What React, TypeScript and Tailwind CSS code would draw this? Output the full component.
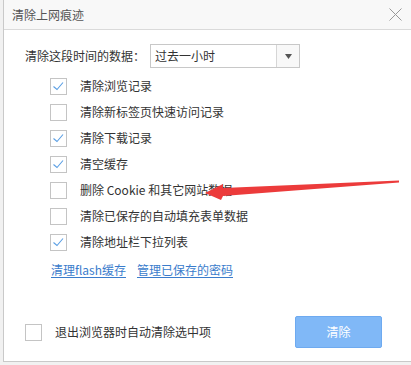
import React from 'react';

type Item = { label: string; checked: boolean };

const items: Item[] = [
  { label: '清除浏览记录', checked: true },
  { label: '清除新标签页快速访问记录', checked: false },
  { label: '清除下载记录', checked: true },
  { label: '清空缓存', checked: true },
  { label: '删除 Cookie 和其它网站数据', checked: false },
  { label: '清除已保存的自动填充表单数据', checked: false },
  { label: '清除地址栏下拉列表', checked: true },
];

function CheckBox({ checked }: { checked: boolean }) {
  return (
    <div className="w-[17px] h-[17px] border border-[#c4c4c4] bg-white flex items-center justify-center shrink-0">
      {checked && (
        <svg width="15" height="15" viewBox="0 0 15 15">
          <polyline points="2.5,7.5 6,10.5 12,3.5" fill="none" stroke="#5b9fe4" strokeWidth="1.1" />
        </svg>
      )}
    </div>
  );
}

export default function App() {
  return (
    <div
      className="relative w-[411px] h-[365px] overflow-hidden bg-[#f1f1f1] text-[#333]"
      style={{ fontFamily: '"Noto Sans CJK SC", "Noto Sans", sans-serif' }}
    >
      {/* 对话框 */}
      <div className="ml-[3px] h-[362px] bg-white border-l border-b border-[#c9c9c9] flex flex-col">
        {/* 标题栏 */}
        <div className="h-[30px] shrink-0 bg-[#f8f8f8] border-b border-[#dadada] flex items-center justify-between pl-[8px] pr-[9px]">
          <span className="text-[12px] text-[#555]">清除上网痕迹</span>
          <svg width="13" height="13" viewBox="0 0 13 13">
            <path d="M0.5 0.5 L12.5 12.5 M12.5 0.5 L0.5 12.5" stroke="#999" strokeWidth="1" />
          </svg>
        </div>

        {/* 时间范围 */}
        <div className="flex items-center pl-[21px] mt-[14px]">
          <span className="text-[12px] w-[125px]">清除这段时间的数据：</span>
          <div className="w-[150px] h-[24px] border border-[#c8c8c8] flex items-stretch">
            <div className="flex-1 flex items-center pl-[4px] text-[12px]">过去一小时</div>
            <div className="w-[23px] border-l border-[#d6d6d6] bg-[#f8f8f8] flex items-center justify-center">
              <svg width="7" height="5" viewBox="0 0 7 5">
                <path d="M0 0 L7 0 L3.5 5 Z" fill="#555" />
              </svg>
            </div>
          </div>
        </div>

        {/* 选项 */}
        <div className="flex flex-col mt-[5px]">
          {items.map((it) => (
            <div key={it.label} className="h-[26px] flex items-center pl-[46px]">
              <CheckBox checked={it.checked} />
              <span className="ml-[13px] text-[12px] whitespace-nowrap">{it.label}</span>
            </div>
          ))}
        </div>

        {/* 链接 */}
        <div className="flex items-center gap-[11px] pl-[47px] mt-[6px] text-[12px] text-[#3a7ccc]">
          <span className="underline underline-offset-2">清理flash缓存</span>
          <span className="underline underline-offset-2">管理已保存的密码</span>
        </div>

        {/* 底部 */}
        <div className="mt-auto flex items-center pl-[21px] pr-[29px] pb-[13px]">
          <CheckBox checked={false} />
          <span className="ml-[13px] text-[12px]">退出浏览器时自动清除选中项</span>
          <button className="ml-auto w-[87px] h-[32px] bg-[#80b8f7] border border-[#6eaaf0] rounded-[2px] text-white text-[12px]">
            清除
          </button>
        </div>
      </div>

      {/* 红色箭头标注 */}
      <svg className="absolute left-0 top-0 pointer-events-none" width="411" height="365" viewBox="0 0 411 365">
        <polygon
          points="205,193 223,184 223,188 399,180.5 399,182.5 223,196 221,200"
          fill="#ec3b3b"
        />
      </svg>
    </div>
  );
}
